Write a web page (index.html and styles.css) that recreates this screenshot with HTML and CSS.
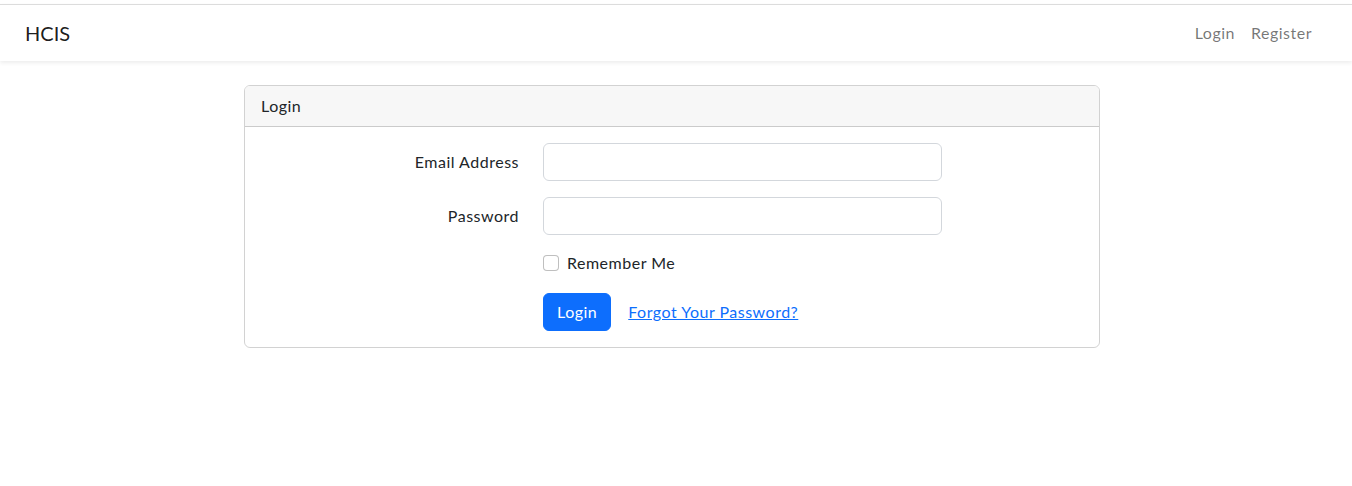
FILE: index.html
```html
<!DOCTYPE html>
<html lang="en">
<head>
<meta charset="utf-8">
<title>HCIS</title>
<link rel="stylesheet" href="styles.css">
</head>
<body>
<nav class="navbar">
  <div class="nav-container">
    <a class="brand" href="#">HCIS</a>
    <ul class="nav-links">
      <li><a class="nav-link" href="#">Login</a></li>
      <li><a class="nav-link" href="#">Register</a></li>
    </ul>
  </div>
</nav>
<main class="main">
  <div class="container">
    <div class="col">
      <div class="card">
        <div class="card-header">Login</div>
        <div class="card-body">
          <form class="form">
            <div class="row">
              <label class="label" for="email">Email Address</label>
              <div class="field"><input id="email" class="input" type="email"></div>
            </div>
            <div class="row">
              <label class="label" for="password">Password</label>
              <div class="field"><input id="password" class="input" type="password"></div>
            </div>
            <div class="row">
              <div class="label-spacer"></div>
              <div class="field">
                <div class="check">
                  <input class="check-input" type="checkbox" id="remember">
                  <label class="check-label" for="remember">Remember Me</label>
                </div>
              </div>
            </div>
            <div class="row row-last">
              <div class="label-spacer"></div>
              <div class="field actions">
                <button type="button" class="btn btn-primary">Login</button>
                <a class="btn btn-link" href="#">Forgot Your Password?</a>
              </div>
            </div>
          </form>
        </div>
      </div>
    </div>
  </div>
</main>
</body>
</html>
```
FILE: styles.css
```css
* { box-sizing: border-box; }
html, body {
  margin: 0;
  padding: 0;
  background: #fff;
}
body {
  font-family: Lato, "Liberation Sans", sans-serif;
  font-size: 16px;
  line-height: 1.5;
  letter-spacing: 0.5px;
  color: #212529;
  padding-top: 4px;
}
.navbar {
  border-top: 1px solid #dcdcdc;
  background: #fff;
  box-shadow: 0 2px 4px rgba(0,0,0,.075);
  padding: 8px 0;
  position: relative;
  z-index: 1;
}
.nav-container {
  display: flex;
  align-items: center;
  justify-content: space-between;
  padding: 0 40px 0 25px;
}
.brand {
  font-size: 20px;
  line-height: 30px;
  padding: 5px 0;
  letter-spacing: 0;
  color: rgba(0,0,0,.9);
  text-decoration: none;
}
.nav-links {
  list-style: none;
  margin: 0;
  padding: 0;
  display: flex;
  gap: 16px;
}
.nav-link {
  color: rgba(0,0,0,.55);
  text-decoration: none;
  display: block;
  padding: 8px 0;
}
.main {
  padding: 24px 0;
}
.container {
  display: flex;
  justify-content: center;
  padding-right: 8px;
}
.col {
  width: 856px;
}
.card {
  border: 1px solid rgba(0,0,0,.175);
  border-radius: 6px;
  overflow: hidden;
}
.card-header {
  padding: 8px 16px;
  background: #f7f7f7;
  border-bottom: 1px solid rgba(0,0,0,.175);
}
.card-body {
  padding: 16px;
}
.form { margin: 0; }
.row {
  display: flex;
  margin: 0 -12px 16px;
}
.row-last { margin-bottom: 0; }
.label, .label-spacer {
  width: 282px;
  padding: 7px 12px;
  text-align: right;
}
.field {
  width: 423px;
  padding: 0 12px;
}
.input {
  display: block;
  width: 100%;
  height: 38px;
  padding: 6px 12px;
  font: inherit;
  color: #212529;
  border: 1px solid #d3d7dc;
  border-radius: 6px;
  background: #fff;
}
.check {
  padding-left: 24px;
  min-height: 24px;
  margin-bottom: 2px;
  display: block;
}
.check-input {
  appearance: none;
  -webkit-appearance: none;
  float: left;
  width: 16px;
  height: 16px;
  margin: 4px 0 0 -24px;
  border: 1px solid rgba(0,0,0,.25);
  border-radius: 4px;
  background: #fff;
}
.actions {
  display: flex;
  align-items: center;
  gap: 4px;
}
.btn {
  display: inline-block;
  font: inherit;
  letter-spacing: inherit;
  line-height: 24px;
  padding: 6px 12px;
  border: 1px solid transparent;
  border-radius: 6px;
}
.btn-primary {
  color: #fff;
  background: #0d6efd;
  border-color: #0d6efd;
  padding: 6px 13px;
}
.btn-link {
  color: #0d6efd;
  text-decoration: underline;
}
```
